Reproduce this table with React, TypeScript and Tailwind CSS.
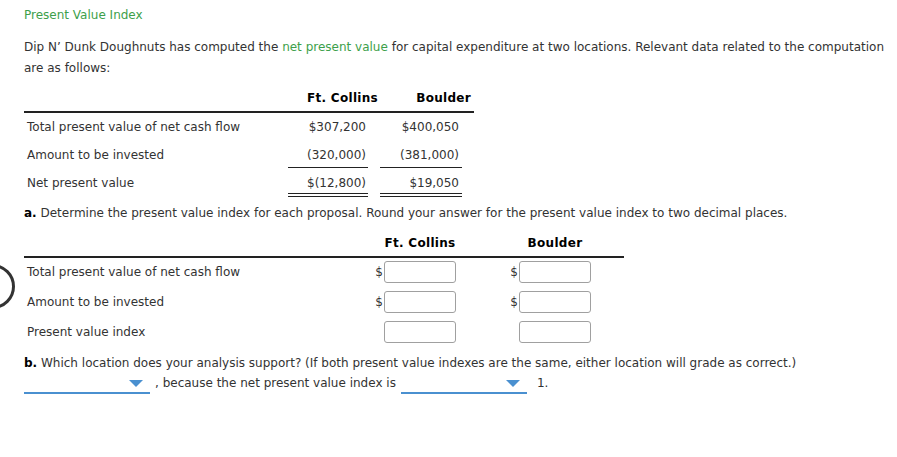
const font = { fontFamily: '"DejaVu Sans", Verdana, sans-serif' };

function Input({ dollar }: { dollar?: boolean }) {
  return (
    <div className="flex items-center justify-end">
      <span className="mr-px">{dollar ? '$' : ''}</span>
      <div className="h-[22px] w-[72px] rounded-[3px] border border-[#a0a0a0] bg-white" />
    </div>
  );
}

function Dropdown() {
  return (
    <div className="relative h-[20px] w-[126px] border-b-2 border-[#4a90d0]">
      <svg className="absolute right-[7px] top-[6px]" width="14" height="7" viewBox="0 0 14 7">
        <path d="M0 0h14L7 7z" fill="#4a90d0" />
      </svg>
    </div>
  );
}

function Head({ label }: { label: string }) {
  return (
    <div className="flex justify-end">
      <div className="w-[72px] whitespace-nowrap text-center">{label}</div>
    </div>
  );
}

export default function App() {
  return (
    <div className="relative min-h-[457px] bg-white pl-6 pr-2 pt-[6px] text-[12px] text-[#333]" style={font}>
      <div className="absolute left-[-30px] top-[264px] h-[45px] w-[45px] rounded-full border-[3px] border-[#333]" />

      <h1 className="leading-[18px] text-[#3d9f4b]">Present Value Index</h1>

      <p className="mt-[13px] leading-[21px]">
        Dip N’ Dunk Doughnuts has computed the <span className="text-[#3d9f4b]">net present value</span> for capital
        expenditure at two locations. Relevant data related to the computation are as follows:
      </p>

      <div className="mt-[10px] w-[450px]">
        <div className="grid grid-cols-[264px_90px_93px] border-b-2 border-[#222] pb-[4px] font-bold leading-[18px] tracking-[0.3px] text-black">
          <span />
          <span className="text-right">Ft. Collins</span>
          <span className="text-right">Boulder</span>
        </div>
        <div className="grid grid-cols-[261px_80px_12px_82px] pl-[3px] leading-[18px]">
          <span className="pt-[5px]">Total present value of net cash flow</span>
          <span className="pr-[2px] pt-[5px] text-right">$307,200</span>
          <span />
          <span className="pr-[3px] pt-[5px] text-right">$400,050</span>

          <span className="pt-[10px]">Amount to be invested</span>
          <span className="border-b border-[#222] pb-[3px] pr-[2px] pt-[10px] text-right">(320,000)</span>
          <span />
          <span className="border-b border-[#222] pb-[3px] pr-[3px] pt-[10px] text-right">(381,000)</span>

          <span className="pt-[6px]">Net present value</span>
          <span className="border-b-[4px] border-double border-[#222] pb-[1px] pr-[2px] pt-[6px] text-right">$(12,800)</span>
          <span />
          <span className="border-b-[4px] border-double border-[#222] pb-[1px] pr-[3px] pt-[6px] text-right">$19,050</span>
        </div>
      </div>

      <p className="mt-[7px] leading-[18px]">
        <b className="text-black">a.</b> Determine the present value index for each proposal. Round your answer for the
        present value index to two decimal places.
      </p>

      <div className="mt-[12px] w-[600px]">
        <div className="grid grid-cols-[336px_96px_135px] border-b-2 border-[#222] pb-[4px] font-bold leading-[18px] tracking-[0.3px] text-black">
          <span />
          <Head label="Ft. Collins" />
          <Head label="Boulder" />
        </div>
        <div className="grid grid-cols-[351px_81px_135px] gap-y-[8px] pt-[3px]">
          <span className="self-center pl-[3px]">Total present value of net cash flow</span>
          <Input dollar />
          <Input dollar />
          <span className="self-center pl-[3px]">Amount to be invested</span>
          <Input dollar />
          <Input dollar />
          <span className="self-center pl-[3px]">Present value index</span>
          <Input />
          <Input />
        </div>
      </div>

      <p className="mt-[11px] leading-[18px]">
        <b className="text-black">b.</b> Which location does your analysis support? (If both present value indexes are
        the same, either location will grade as correct.)
      </p>

      <div className="mt-[2px] flex items-end">
        <Dropdown />
        <span className="ml-[5px] pb-[2px] leading-[18px]">, because the net present value index is</span>
        <div className="ml-[5px]">
          <Dropdown />
        </div>
        <span className="ml-[10px] pb-[2px] leading-[18px]">1.</span>
      </div>
    </div>
  );
}
